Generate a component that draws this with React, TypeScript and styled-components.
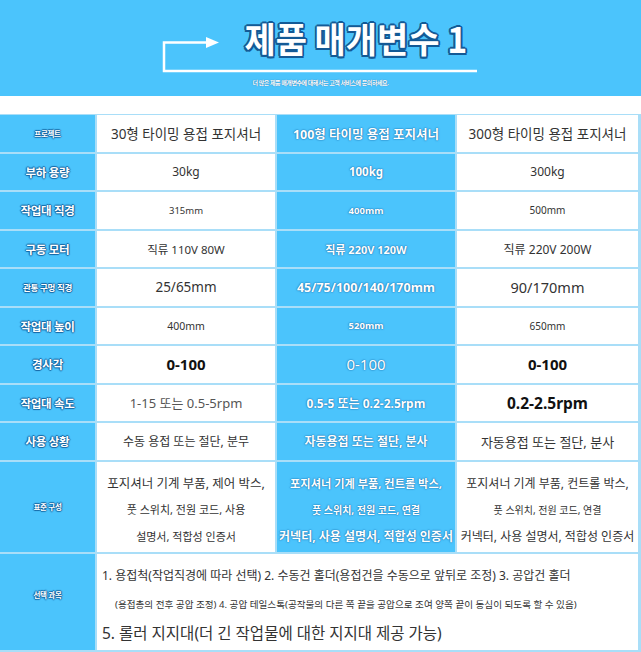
import styled, { createGlobalStyle } from "styled-components"

const GlobalStyle = createGlobalStyle`
  body {
    margin: 0;
    background: #fff;
    font-family: "Noto Sans", "Noto Sans CJK KR", sans-serif;
  }
`

type Tone = "label" | "plain" | "blue"

type CellData = {
  t: string | string[]
  fs: number | number[]
  fw?: number
  color?: string
}

type RowData = {
  label: string
  lfs: number
  cells: CellData[]
}

const rows: RowData[] = [
  {
    label: "프로젝트",
    lfs: 7.5,
    cells: [
      { t: "30형 타이밍 용접 포지셔너", fs: 13.5, color: "#333" },
      { t: "100형 타이밍 용접 포지셔너", fs: 12.5, fw: 700 },
      { t: "300형 타이밍 용접 포지셔너", fs: 13.5, color: "#333" },
    ],
  },
  {
    label: "부하 용량",
    lfs: 11.5,
    cells: [
      { t: "30kg", fs: 12, color: "#333" },
      { t: "100kg", fs: 11.5, fw: 700 },
      { t: "300kg", fs: 12, color: "#333" },
    ],
  },
  {
    label: "작업대 직경",
    lfs: 11.5,
    cells: [
      { t: "315mm", fs: 9.5, color: "#333" },
      { t: "400mm", fs: 9.5, fw: 700 },
      { t: "500mm", fs: 10, color: "#333" },
    ],
  },
  {
    label: "구동 모터",
    lfs: 11.5,
    cells: [
      { t: "직류 110V 80W", fs: 11.5, color: "#333" },
      { t: "직류 220V 120W", fs: 11, fw: 700 },
      { t: "직류 220V 200W", fs: 12, color: "#333" },
    ],
  },
  {
    label: "관통 구멍 직경",
    lfs: 8.5,
    cells: [
      { t: "25/65mm", fs: 13.5, color: "#333" },
      { t: "45/75/100/140/170mm", fs: 12.5, fw: 700 },
      { t: "90/170mm", fs: 14.5, color: "#333" },
    ],
  },
  {
    label: "작업대 높이",
    lfs: 11.5,
    cells: [
      { t: "400mm", fs: 10.5, color: "#333" },
      { t: "520mm", fs: 9.5, fw: 700 },
      { t: "650mm", fs: 10, color: "#333" },
    ],
  },
  {
    label: "경사각",
    lfs: 11.5,
    cells: [
      { t: "0-100", fs: 15, fw: 700, color: "#111" },
      { t: "0-100", fs: 15, fw: 400 },
      { t: "0-100", fs: 15, fw: 700, color: "#111" },
    ],
  },
  {
    label: "작업대 속도",
    lfs: 11.5,
    cells: [
      { t: "1-15 또는 0.5-5rpm", fs: 13, color: "#555" },
      { t: "0.5-5 또는 0.2-2.5rpm", fs: 12, fw: 700 },
      { t: "0.2-2.5rpm", fs: 15.5, fw: 700, color: "#111" },
    ],
  },
  {
    label: "사용 상황",
    lfs: 11.5,
    cells: [
      { t: "수동 용접 또는 절단, 분무", fs: 12, color: "#333" },
      { t: "자동용접 또는 절단, 분사", fs: 12, fw: 700 },
      { t: "자동용접 또는 절단, 분사", fs: 13, color: "#333" },
    ],
  },
  {
    label: "표준 구성",
    lfs: 7.5,
    cells: [
      {
        t: ["포지셔너 기계 부품, 제어 박스,", "풋 스위치, 전원 코드, 사용", "설명서, 적합성 인증서"],
        fs: [12.5, 11, 11],
        color: "#333",
      },
      {
        t: ["포지셔너 기계 부품, 컨트롤 박스,", "풋 스위치, 전원 코드, 연결", "커넥터, 사용 설명서, 적합성 인증서"],
        fs: [11.2, 10, 12],
        fw: 700,
      },
      {
        t: ["포지셔너 기계 부품, 컨트롤 박스,", "풋 스위치, 전원 코드, 연결", "커넥터, 사용 설명서, 적합성 인증서"],
        fs: [12, 10, 12],
        color: "#333",
      },
    ],
  },
]

const tones: Tone[] = ["plain", "blue", "plain"]

function App() {
  return (
    <>
      <GlobalStyle />
      <Page>
        <Banner>
          <ArrowArt viewBox="0 0 641 96" width="641" height="96">
            <path d="M208 42.5 H164 V71 H477" />
            <polygon points="206,37 219,42.5 206,48" />
          </ArrowArt>
          <TitleRow>
            <Title>제품 매개변수 1</Title>
          </TitleRow>
          <Subtitle>더 많은 제품 매개변수에 대해서는 고객 서비스에 문의하세요.</Subtitle>
        </Banner>

        <Table>
          {rows.map((row, i) => (
            <Row key={i}>
              <Cell $tone="label" $fs={row.lfs}>
                {row.label}
              </Cell>
              {row.cells.map((c, j) =>
                Array.isArray(c.t) ? (
                  <MultiCell key={j} $tone={tones[j]} $fs={12} $fw={c.fw} $color={c.color}>
                    {c.t.map((line, k) => (
                      <Line key={k} $fs={(c.fs as number[])[k]}>
                        {line}
                      </Line>
                    ))}
                  </MultiCell>
                ) : (
                  <Cell key={j} $tone={tones[j]} $fs={c.fs as number} $fw={c.fw} $color={c.color}>
                    {c.t}
                  </Cell>
                )
              )}
            </Row>
          ))}
          <Row>
            <Cell $tone="label" $fs={7.5} $lift={7}>
              선택 과목
            </Cell>
            <OptionCell>
              <OptionLine $fs={12}>
                1. 용접척(작업직경에 따라 선택) 2. 수동건 홀더(용접건을 수동으로 앞뒤로 조정) 3. 공압건 홀더
              </OptionLine>
              <OptionLine $fs={9.6} $indent={13}>
                (용접총의 전후 공압 조정) 4. 공압 테일스톡(공작물의 다른 쪽 끝을 공압으로 조여 양쪽 끝이 동심이 되도록 할 수 있음)
              </OptionLine>
              <OptionLine $fs={15.5}>5. 롤러 지지대(더 긴 작업물에 대한 지지대 제공 가능)</OptionLine>
            </OptionCell>
          </Row>
        </Table>
      </Page>
    </>
  )
}

export default App

const BLUE = "#4bc4fc"
const LINE = "#a9def8"

const Page = styled.div`
  width: 641px;
  height: 652px;
  overflow: hidden;
`

const Banner = styled.div`
  position: relative;
  height: 96px;
  background: ${BLUE};
  display: flex;
  flex-direction: column;
  align-items: center;
  padding-top: 19px;
  box-sizing: border-box;
`

const ArrowArt = styled.svg`
  position: absolute;
  left: 0;
  top: 0;
  path {
    fill: none;
    stroke: #fff;
    stroke-width: 2.5;
  }
  polygon {
    fill: #fff;
  }
`

const TitleRow = styled.div`
  position: relative;
  margin-left: 70px;
  height: 38px;
  display: flex;
  justify-content: center;
`

const Title = styled.span`
  display: inline-block;
  font-family: "Noto Sans CJK KR", sans-serif;
  font-size: 35px;
  line-height: 38px;
  font-weight: 700;
  color: #fff;
  transform: scaleX(0.97);
  white-space: nowrap;
  text-shadow:
    2px 0 0 #135a96,
    -2px 0 0 #135a96,
    0 2px 0 #135a96,
    0 -2px 0 #135a96,
    1.5px 1.5px 0 #135a96,
    -1.5px -1.5px 0 #135a96,
    1.5px -1.5px 0 #135a96,
    -1.5px 1.5px 0 #135a96;
`

const Subtitle = styled.div`
  margin-top: 22px;
  font-size: 6px;
  line-height: 8px;
  font-weight: 700;
  letter-spacing: -0.45px;
  color: #fff;
  white-space: nowrap;
  text-shadow: 0 0 1px #1a5f99;
`

const Table = styled.div`
  margin-top: 18px;
  border-top: 1px solid ${LINE};
  background: ${LINE};
  display: grid;
  grid-template-columns: 95px 178px 178px 181px;
  grid-template-rows: repeat(9, 36.5px) 90px 96px;
  column-gap: 2px;
  row-gap: 2px;
  padding-right: 3px;
  padding-bottom: 2px;
`

const Row = styled.div`
  display: contents;
`

const Cell = styled.div<{ $tone: Tone; $fs: number; $fw?: number; $color?: string; $lift?: number }>`
  display: flex;
  align-items: center;
  justify-content: center;
  text-align: center;
  white-space: nowrap;
  padding-bottom: ${(p) => (p.$lift || 0) * 2}px;
  background: ${(p) => (p.$tone === "plain" ? "#fff" : BLUE)};
  color: ${(p) => (p.$tone === "plain" ? p.$color || "#333" : "#fff")};
  font-size: ${(p) => p.$fs}px;
  font-weight: ${(p) => (p.$tone === "label" ? 700 : p.$fw || 400)};
  letter-spacing: ${(p) => (p.$tone === "label" ? "-0.3px" : "0")};
  text-shadow: ${(p) =>
    p.$tone === "label"
      ? "1px 0 1px #14629e, -1px 0 1px #14629e, 0 1px 1px #14629e, 0 -1px 1px #14629e"
      : p.$tone === "blue"
      ? "0 0 1px #1668a5, 0 0 2px #1d74b3"
      : "none"};
`

const MultiCell = styled(Cell)`
  flex-direction: column;
  justify-content: flex-start;
  padding-top: 9px;
`

const Line = styled.div<{ $fs: number }>`
  font-size: ${(p) => p.$fs}px;
  line-height: 26.5px;
`

const OptionCell = styled.div`
  grid-column: 2 / span 3;
  background: #fff;
  color: #333;
  padding: 7px 0 0 5px;
  display: flex;
  flex-direction: column;
  align-items: flex-start;
`

const OptionLine = styled.div<{ $fs: number; $indent?: number }>`
  font-size: ${(p) => p.$fs}px;
  line-height: 29px;
  padding-left: ${(p) => p.$indent || 0}px;
  white-space: nowrap;
`
